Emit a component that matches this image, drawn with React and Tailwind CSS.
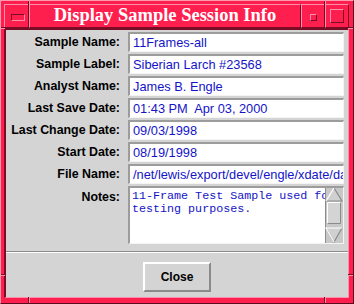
export default function App() {
  const rows = [
    ["Sample Name:", "11Frames-all"],
    ["Sample Label:", "Siberian Larch #23568"],
    ["Analyst Name:", "James B. Engle"],
    ["Last Save Date:", "01:43 PM  Apr 03, 2000"],
    ["Last Change Date:", "09/03/1998"],
    ["Start Date:", "08/19/1998"],
    ["File Name:", "/net/lewis/export/devel/engle/xdate/data"],
  ];
  const seg =
    "h-full border border-t-[#ff8fab] border-l-[#ff8fab] border-b-[#7a0c26] border-r-[#7a0c26] flex items-center justify-center";
  return (
    <div className="relative w-[354px] h-[304px] bg-[#ff1f4f] border border-t-[#ff9ab0] border-l-[#ff9ab0] border-b-[#5e0a1e] border-r-[#5e0a1e] pt-[3px] pl-[3px] pr-[4px] pb-[5px] flex flex-col font-['Liberation_Sans',Arial,sans-serif]">
      {/* frame notches */}
      <div className="absolute left-[27px] top-0 w-px h-[4px] bg-[#7a0c26]" />
      <div className="absolute left-[28px] top-0 w-px h-[4px] bg-[#ff8fab]" />
      <div className="absolute left-[323px] top-0 w-px h-[4px] bg-[#7a0c26]" />
      <div className="absolute left-[324px] top-0 w-px h-[4px] bg-[#ff8fab]" />
      <div className="absolute left-[27px] bottom-0 w-px h-[6px] bg-[#7a0c26]" />
      <div className="absolute left-[28px] bottom-0 w-px h-[6px] bg-[#ff8fab]" />
      <div className="absolute left-[323px] bottom-0 w-px h-[6px] bg-[#7a0c26]" />
      <div className="absolute left-[324px] bottom-0 w-px h-[6px] bg-[#ff8fab]" />
      <div className="absolute left-0 top-[26px] w-[4px] h-px bg-[#7a0c26]" />
      <div className="absolute left-0 top-[27px] w-[4px] h-px bg-[#ff8fab]" />
      <div className="absolute right-0 top-[26px] w-[5px] h-px bg-[#7a0c26]" />
      <div className="absolute right-0 top-[27px] w-[5px] h-px bg-[#ff8fab]" />
      <div className="absolute left-0 top-[273px] w-[4px] h-px bg-[#7a0c26]" />
      <div className="absolute left-0 top-[274px] w-[4px] h-px bg-[#ff8fab]" />
      <div className="absolute right-0 top-[273px] w-[5px] h-px bg-[#7a0c26]" />
      <div className="absolute right-0 top-[274px] w-[5px] h-px bg-[#ff8fab]" />

      {/* title bar */}
      <div className="flex h-[24px] shrink-0">
        <div className={`w-[25px] ${seg}`}>
          <div className="w-[14px] h-[7px] border border-t-[#7a0c26] border-l-[#7a0c26] border-b-[#ff8fab] border-r-[#ff8fab] ml-[2px] mt-[2px]" />
        </div>
        <div className={`w-[272px] ${seg}`}>
          <span className="text-white font-bold text-[18.5px] leading-none font-['Liberation_Serif','Times_New_Roman',serif] -mt-[1px]">
            Display Sample Session Info
          </span>
        </div>
        <div className={`w-[24px] ${seg}`}>
          <div className="w-[7px] h-[7px] border border-t-[#ff8fab] border-l-[#ff8fab] border-b-[#7a0c26] border-r-[#7a0c26] mt-[2px]" />
        </div>
        <div className={`w-[24px] ${seg}`}>
          <div className="w-[14px] h-[14px] border border-t-[#ff8fab] border-l-[#ff8fab] border-b-[#7a0c26] border-r-[#7a0c26]" />
        </div>
      </div>

      {/* content */}
      <div className="flex-1 border-t-2 border-l-2 border-b border-r border-t-[#7a0c26] border-l-[#7a0c26] border-b-[#ff8fab] border-r-[#ff8fab] bg-[#d4d4d4] flex flex-col">
        <div className="flex flex-col gap-[2px] pt-[2px]">
          {rows.map(([label, value]) => (
            <div key={label} className="flex items-center h-[20px]">
              <div className="w-[114px] text-right text-[12.4px] font-bold text-black leading-none whitespace-nowrap">
                {label}
              </div>
              <div className="ml-[8px] w-[216px] h-[20px] bg-white border-t-2 border-l-2 border-b border-r border-t-[#9c9c9c] border-l-[#9c9c9c] border-b-[#f4f4f4] border-r-[#f4f4f4] pl-[3px] overflow-hidden">
                <div className="text-[12.8px] leading-[17px] text-[#1414c8] whitespace-pre">
                  {value}
                </div>
              </div>
            </div>
          ))}
          <div className="flex h-[58px]">
            <div className="w-[114px] text-right text-[12.4px] font-bold text-black leading-none pt-[5px]">
              Notes:
            </div>
            <div className="ml-[8px] w-[216px] h-[58px] bg-white border-t-2 border-l-2 border-b border-r border-t-[#9c9c9c] border-l-[#9c9c9c] border-b-[#f4f4f4] border-r-[#f4f4f4] flex">
              <div className="flex-1 overflow-hidden pl-[2px] pt-[2px] font-['Liberation_Mono','Courier_New',monospace] text-[11.7px] leading-[13px] text-[#1414c8] whitespace-pre">
                <div>11-Frame Test Sample used for</div>
                <div>testing purposes.</div>
              </div>
              <svg width="18" height="55" viewBox="0 0 18 55" className="shrink-0 block">
                <rect x="0" y="0" width="18" height="55" fill="#c8c8c8" />
                <line x1="0.5" y1="0" x2="0.5" y2="55" stroke="#8c8c8c" />
                <polygon points="9,0 17,13 1,13" fill="#d0d0d0" />
                <polyline points="9,0 17,13 1,13" fill="none" stroke="#8a8a8a" strokeWidth="1.2" />
                <polyline points="1,13 9,0" fill="none" stroke="#ffffff" strokeWidth="1.2" />
                <rect x="2" y="14.5" width="14" height="21" fill="#d4d4d4" />
                <polyline points="2.5,35.5 2.5,14.5 16,14.5" fill="none" stroke="#ffffff" />
                <polyline points="2.5,35.5 15.5,35.5 15.5,14.5" fill="none" stroke="#8a8a8a" />
                <polygon points="1,40 17,40 9,54" fill="#d0d0d0" />
                <polyline points="1,40 9,54 17,40" fill="none" stroke="#8a8a8a" strokeWidth="1.2" />
                <polyline points="9,54 1,40 17,40" fill="none" stroke="#ffffff" strokeWidth="1.2" />
              </svg>
            </div>
          </div>
        </div>
        <div className="mt-[7px] border-t border-b border-t-[#8c8c8c] border-b-white" />
        <div className="flex justify-center pt-[9px]">
          <button className="w-[68px] h-[30px] bg-[#d4d4d4] border-2 border-t-white border-l-white border-b-[#8a8a8a] border-r-[#8a8a8a] text-[12px] font-bold text-black leading-none">
            Close
          </button>
        </div>
      </div>
    </div>
  );
}
